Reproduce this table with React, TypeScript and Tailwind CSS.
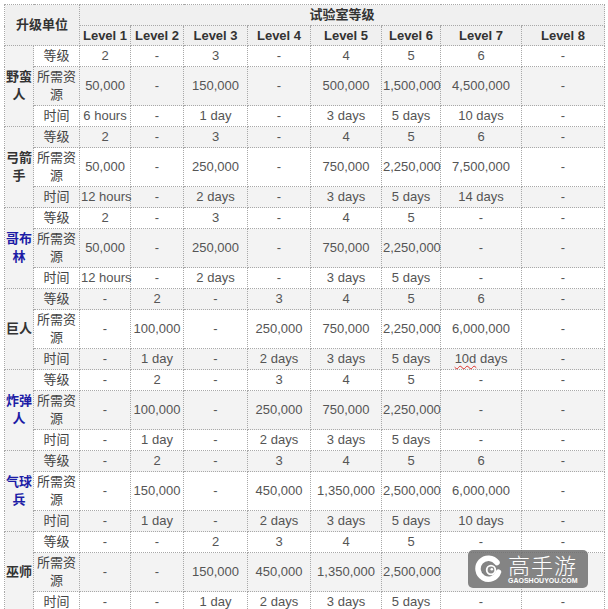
import React from 'react';

type Unit = {
  name: string;
  link?: boolean;
  level: string[];
  cost: string[];
  time: string[];
};

const units: Unit[] = [
  {
    name: '野蛮人',
    level: ['2', '-', '3', '-', '4', '5', '6', '-'],
    cost: ['50,000', '-', '150,000', '-', '500,000', '1,500,000', '4,500,000', '-'],
    time: ['6 hours', '-', '1 day', '-', '3 days', '5 days', '10 days', '-'],
  },
  {
    name: '弓箭手',
    level: ['2', '-', '3', '-', '4', '5', '6', '-'],
    cost: ['50,000', '-', '250,000', '-', '750,000', '2,250,000', '7,500,000', '-'],
    time: ['12 hours', '-', '2 days', '-', '3 days', '5 days', '14 days', '-'],
  },
  {
    name: '哥布林',
    link: true,
    level: ['2', '-', '3', '-', '4', '5', '-', '-'],
    cost: ['50,000', '-', '250,000', '-', '750,000', '2,250,000', '-', '-'],
    time: ['12 hours', '-', '2 days', '-', '3 days', '5 days', '-', '-'],
  },
  {
    name: '巨人',
    level: ['-', '2', '-', '3', '4', '5', '6', '-'],
    cost: ['-', '100,000', '-', '250,000', '750,000', '2,250,000', '6,000,000', '-'],
    time: ['-', '1 day', '-', '2 days', '3 days', '5 days', '10d days', '-'],
  },
  {
    name: '炸弹人',
    link: true,
    level: ['-', '2', '-', '3', '4', '5', '-', '-'],
    cost: ['-', '100,000', '-', '250,000', '750,000', '2,250,000', '-', '-'],
    time: ['-', '1 day', '-', '2 days', '3 days', '5 days', '-', '-'],
  },
  {
    name: '气球兵',
    link: true,
    level: ['-', '2', '-', '3', '4', '5', '6', '-'],
    cost: ['-', '150,000', '-', '450,000', '1,350,000', '2,500,000', '6,000,000', '-'],
    time: ['-', '1 day', '-', '2 days', '3 days', '5 days', '10 days', '-'],
  },
  {
    name: '巫师',
    level: ['-', '-', '2', '3', '4', '5', '-', '-'],
    cost: ['-', '-', '150,000', '450,000', '1,350,000', '2,500,000', '-', '-'],
    time: ['-', '-', '1 day', '2 days', '3 days', '5 days', '-', '-'],
  },
];

const widths = [29, 46, 51, 53, 64, 63, 71, 59, 81, 83];
const cell = 'border border-dotted border-[#a8a8a8] px-px py-px text-center align-middle leading-[18px]';

function Value({ v }: { v: string }) {
  if (v === '10d days') {
    return (
      <>
        <span className="underline decoration-wavy decoration-[#e0302a] decoration-1 underline-offset-2">10d</span> days
      </>
    );
  }
  return <>{v}</>;
}

function Watermark() {
  return (
    <div className="absolute left-[468px] top-[550px] flex h-[38px] w-[120px] items-center gap-[6px] rounded-[5px] bg-[#707070]/85 pl-[7px]">
      <svg width="27" height="28" viewBox="0 0 27 28">
        <path d="M22 7.5 A10.5 10.5 0 1 0 23.5 17" fill="none" stroke="#fff" strokeWidth="5.5" strokeLinecap="round" />
        <circle cx="16" cy="15" r="4.3" fill="#8a8a8a" stroke="#fff" strokeWidth="1.8" />
        <circle cx="16.8" cy="14.2" r="1.3" fill="#fff" />
      </svg>
      <div className="flex flex-col items-start">
        <span className="text-[22px] leading-[22px] font-light tracking-[1px] text-white" style={{ fontFamily: '"Noto Sans CJK SC", sans-serif' }}>
          高手游
        </span>
        <span className="mt-[2px] text-[7px] leading-[8px] font-bold text-white" style={{ fontFamily: '"Liberation Sans", sans-serif' }}>
          GAOSHOUYOU.COM
        </span>
      </div>
    </div>
  );
}

export default function App() {
  let rowIndex = 0;
  return (
    <div
      className="relative h-[609px] w-[608px] overflow-hidden bg-white pl-[4px] pt-[4px] text-[13px] text-[#555]"
      style={{ fontFamily: '"Liberation Sans", "Noto Sans CJK SC", sans-serif' }}
    >
      <table className="w-[600px] table-fixed border-collapse">
        <colgroup>
          {widths.map((w, i) => (
            <col key={i} style={{ width: w }} />
          ))}
        </colgroup>
        <thead>
          <tr className="bg-[#f0f0f0]">
            <th colSpan={2} rowSpan={2} className={`${cell} font-bold text-[#333]`}>
              升级单位
            </th>
            <th colSpan={8} className={`${cell} font-bold text-[#333]`}>
              试验室等级
            </th>
          </tr>
          <tr className="bg-[#f0f0f0]">
            {[1, 2, 3, 4, 5, 6, 7, 8].map((n) => (
              <th key={n} className="border border-dotted border-[#a8a8a8] px-px py-0 text-center font-bold leading-[19px] text-[#333]">
                Level {n}
              </th>
            ))}
          </tr>
        </thead>
        <tbody>
          {units.map((u) => {
            const rows: [string, string[]][] = [
              ['等级', u.level],
              ['所需资源', u.cost],
              ['时间', u.time],
            ];
            return rows.map(([label, vals], ri) => {
              rowIndex += 1;
              const gray = rowIndex % 2 === 0;
              return (
                <tr key={u.name + label} className={gray ? 'bg-[#f3f3f3]' : 'bg-white'}>
                  {ri === 0 && (
                    <td rowSpan={3} className={`${cell} bg-[#f3f3f3] font-bold ${u.link ? 'text-[#1c1ca6]' : 'text-[#333]'}`}>
                      {u.name}
                    </td>
                  )}
                  <td className={`${cell} text-[#444]`}>{label}</td>
                  {vals.map((v, i) => (
                    <td key={i} className={`${cell} whitespace-nowrap`}>
                      <Value v={v} />
                    </td>
                  ))}
                </tr>
              );
            });
          })}
        </tbody>
      </table>
      <Watermark />
    </div>
  );
}
